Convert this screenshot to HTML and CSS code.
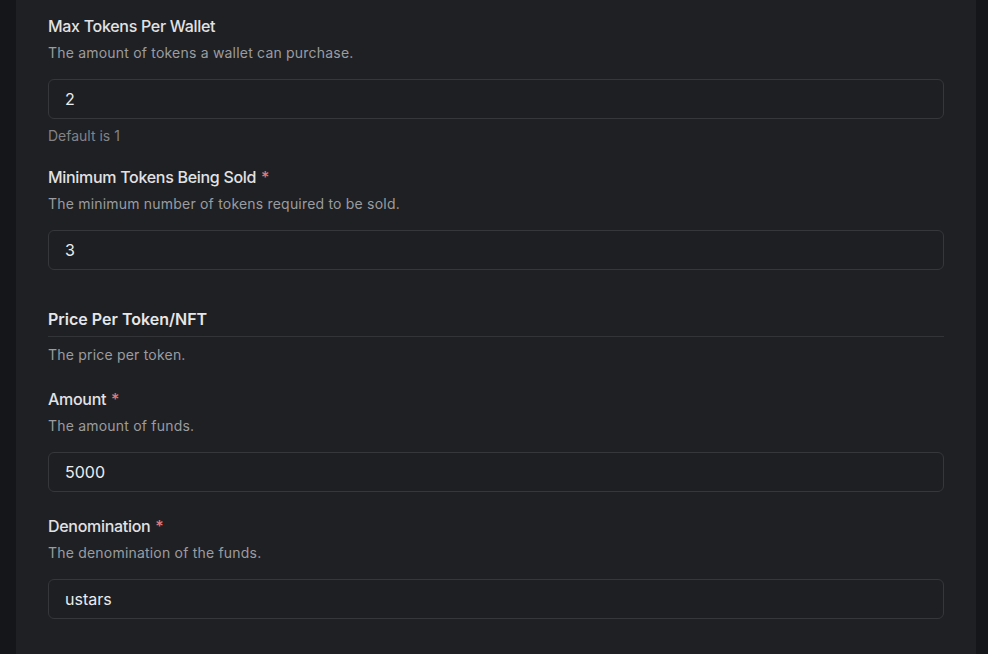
FILE: index.html
```html
<!DOCTYPE html>
<html>
<head>
<meta charset="utf-8">
<link rel="stylesheet" href="styles.css">
</head>
<body>
<div class="page">
  <div class="panel">
    <div class="field first">
      <label class="label">Max Tokens Per Wallet</label>
      <p class="desc">The amount of tokens a wallet can purchase.</p>
      <div class="input">2</div>
      <p class="hint">Default is 1</p>
    </div>
    <div class="field after-hint">
      <label class="label">Minimum Tokens Being Sold <span class="req">*</span></label>
      <p class="desc">The minimum number of tokens required to be sold.</p>
      <div class="input">3</div>
    </div>
    <div class="section">
      <h3 class="section-title">Price Per Token/NFT</h3>
      <p class="desc section-desc">The price per token.</p>
    </div>
    <div class="field after-section">
      <label class="label">Amount <span class="req">*</span></label>
      <p class="desc">The amount of funds.</p>
      <div class="input">5000</div>
    </div>
    <div class="field">
      <label class="label">Denomination <span class="req">*</span></label>
      <p class="desc">The denomination of the funds.</p>
      <div class="input">ustars</div>
    </div>
  </div>
</div>
</body>
</html>
```
FILE: styles.css
```css
html, body {
  margin: 0;
  padding: 0;
  background: #15161a;
  height: 100%;
  overflow: hidden;
}
body {
  font-family: Inter, "Noto Sans", sans-serif;
  -webkit-font-smoothing: antialiased;
}
.page {
  padding: 0 12px 0 16px;
  height: 100%;
}
.panel {
  background: #1f2023;
  padding: 14px 32px 0 32px;
  height: 100%;
  box-sizing: border-box;
}
.field {
  display: flex;
  flex-direction: column;
  margin-top: 22px;
}
.field.first { margin-top: 0; }
.field.after-hint { margin-top: 19px; }
.field.after-section { margin-top: 22px; }
.label {
  font-size: 16px;
  line-height: 24px;
  font-weight: 500;
  letter-spacing: -0.3px;
  color: #e2e2e4;
}
.req {
  color: #e27a7a;
  margin-left: 1px;
}
.desc {
  margin: 5px 0 0 0;
  font-size: 14px;
  line-height: 20px;
  letter-spacing: 0.2px;
  color: #9b9ca0;
}
.input {
  margin-top: 16px;
  height: 40px;
  box-sizing: border-box;
  border: 1px solid #36373b;
  border-radius: 6px;
  background: #1e1f22;
  padding: 0 16px;
  display: flex;
  align-items: center;
  font-size: 16px;
  color: #ececee;
}
.hint {
  margin: 7px 0 0 0;
  font-size: 14px;
  line-height: 20px;
  color: #828388;
}
.section {
  margin-top: 37px;
}
.section-title {
  margin: 0;
  font-size: 16px;
  line-height: 24px;
  font-weight: 600;
  color: #e6e6e8;
  padding-bottom: 5px;
  border-bottom: 1px solid #333438;
}
.section-desc {
  margin-top: 8px;
}
```
